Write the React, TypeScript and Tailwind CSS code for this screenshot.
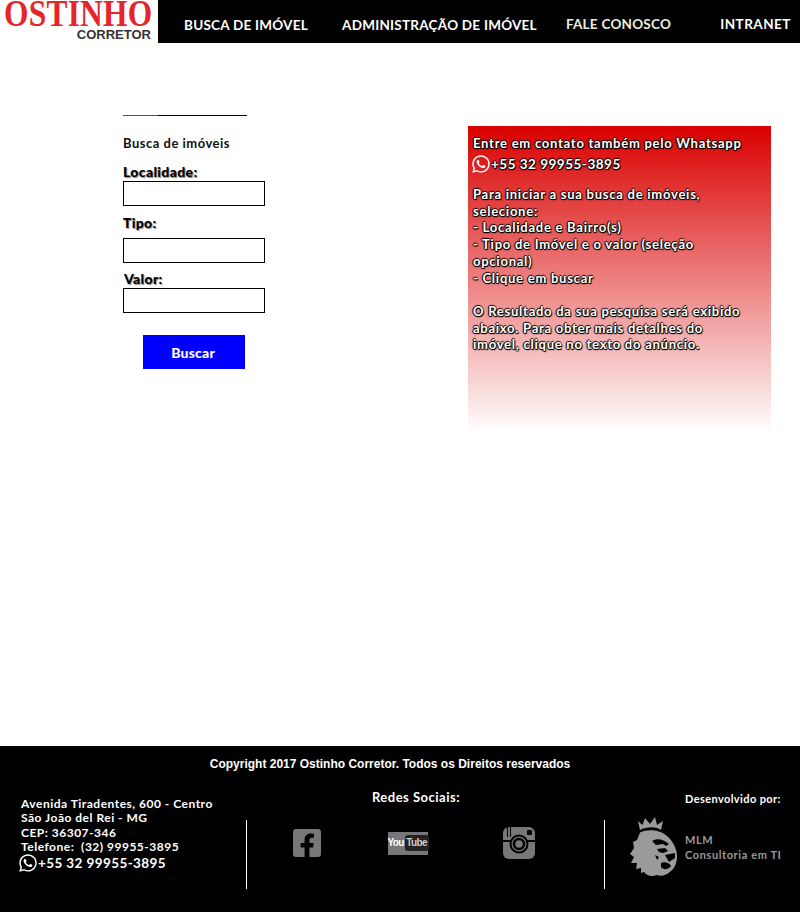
import React from "react";
import { FaWhatsapp, FaFacebookSquare } from "react-icons/fa";

const futura = "font-['Lato','Noto_Sans',sans-serif]";
const panelShadow = "[text-shadow:1px_1px_1px_#000,-1px_0_1px_#000,0_1px_1px_#000,0_-1px_1px_#000]";
const labelShadow = "[text-shadow:1px_1px_1px_#888]";

function Field({ label, labelClass, inputClass }: { label: string; labelClass: string; inputClass?: string }) {
  return (
    <div className={inputClass}>
      <div className={`h-[18px] text-[14px] font-black leading-[17px] tracking-[0.35px] text-black ${labelShadow} ${labelClass}`}>{label}</div>
      <input className="block h-[25px] w-[142px] border border-black bg-white" />
    </div>
  );
}

function Lion() {
  return (
    <svg width="48" height="60" viewBox="0 0 48 60" className="shrink-0">
      <path fill="#9a9a9a" d="M10 13 L8 4 L12.5 8 L15 1 L20 7 L25 0 L27 8 L33 4 L31 13 C25 9 16 10 10 13Z" />
      <path fill="#9a9a9a" d="M10 15.5 C18 11.5 30 12.5 37 19 C43 24 47 32 47 39 C47 45 45 51 41 54 C37 58 31 60 27 58 C22 60 17 59 14 55 L11 56 L11 51 L6 52 L7 46 L1 46 L4 40 L0 37 L4 31 L3 25 L7 23 Z" />
      <path fill="#000" d="M22 24 C27 21 33 22 39 27 L36 29 L33 27 L26 28 Z" />
      <path fill="#000" d="M27 32 L35 31 L38 34 L33 36 L29 35 Z" />
      <path fill="#000" d="M35 38 L45 36 L45 41 L39 45 Z" />
      <path fill="#000" d="M31 46 C34 44 40 46 41 49 C38 53 33 53 31 50 Z" />
      <path fill="#000" d="M25 38 L29 40 L27 43 Z" />
    </svg>
  );
}

function Instagram() {
  return (
    <svg width="32" height="32" viewBox="0 0 32 32">
      <rect width="32" height="32" rx="6" fill="#777" />
      <rect x="0" y="13" width="32" height="2" fill="#000" />
      <circle cx="16" cy="17" r="8.5" fill="#777" stroke="#000" strokeWidth="2" />
      <circle cx="16" cy="17" r="5" fill="#777" stroke="#000" strokeWidth="2.5" />
      <rect x="24" y="3" width="5" height="5" rx="1" fill="#000" />
      <rect x="4" y="0" width="1" height="10" fill="#000" />
      <rect x="7" y="0" width="1" height="10" fill="#000" />
    </svg>
  );
}

export default function App() {
  return (
    <div className={`flex h-[912px] w-[800px] flex-col overflow-hidden bg-white ${futura}`}>
      <header className="flex h-[43px] shrink-0">
        <div className="flex w-[158px] shrink-0 flex-col bg-white">
          <div className="h-[28px] origin-bottom scale-y-[1.2] pl-[4px] font-['Liberation_Serif',serif] text-[31.5px] font-bold leading-[32px] tracking-[0.2px] whitespace-nowrap text-[#e4262c]">
            OSTINHO
          </div>
          <div className="pr-[7px] text-right font-['Liberation_Sans',sans-serif] text-[13px] font-bold leading-[13px] text-[#333]">CORRETOR</div>
        </div>
        <nav className="flex flex-1 items-center bg-black pt-[7px] text-[13.5px] font-bold tracking-[0.25px] text-white">
          <span className="ml-[26px] whitespace-nowrap">BUSCA DE IMÓVEL</span>
          <span className="ml-[34px] whitespace-nowrap">ADMINISTRAÇÃO DE IMÓVEL</span>
          <span className="ml-[29px] -mt-[2px] whitespace-nowrap text-[#eeeedd]">FALE CONOSCO</span>
          <span className="ml-[49px] -mt-[2px] whitespace-nowrap tracking-[0.5px]">INTRANET</span>
        </nav>
      </header>

      <main className="flex flex-1 items-start">
        <section className="ml-[123px] mt-[72px] w-[345px] shrink-0">
          <div className="flex h-px w-[124px]">
            <div className="w-[35px] bg-[#d81c1c]" />
            <div className="flex-1 bg-black" />
          </div>
          <h2 className="mt-[19px] text-[13px] font-bold leading-[17px] tracking-[0.5px] text-[#111]">Busca de imóveis</h2>
          <div className="mt-[11px]">
            <Field label="Localidade:" labelClass="" />
            <Field label="Tipo:" labelClass="mb-[6px]" inputClass="mt-[8px]" />
            <Field label="Valor:" labelClass="pl-px" inputClass="mt-[7px]" />
          </div>
          <button className="ml-[20px] mt-[22px] block h-[34px] w-[102px] bg-[#0000ff] pr-[2px] text-[14px] font-black tracking-[0.2px] text-white">
            Buscar
          </button>
        </section>

        <aside className={`mt-[83px] h-[307px] w-[303px] shrink-0 bg-[linear-gradient(to_bottom,#da0000,#ffffff)] pl-[5px] pt-[8px] text-[13px] font-bold tracking-[0.75px] text-white ${panelShadow}`}>
          <div className="leading-[18px]">Entre em contato também pelo Whatsapp</div>
          <div className="mt-px flex h-[22px] items-center text-[13.5px] tracking-[0.5px]">
            <FaWhatsapp className="-ml-[2px] shrink-0" size={20} />
            <span>+55 32 99955-3895</span>
          </div>
          <div className="mt-[11px] w-[272px] leading-[16.7px]">
            <p>Para iniciar a sua busca de imóveis, selecione:</p>
            <p>- Localidade e Bairro(s)</p>
            <p>- Tipo de Imóvel e o valor (seleção opcional)</p>
            <p>- Clique em buscar</p>
            <p className="mt-[16.7px]">O Resultado da sua pesquisa será exibido abaixo. Para obter mais detalhes do imóvel, clique no texto do anúncio.</p>
          </div>
        </aside>
      </main>

      <footer className="h-[166px] shrink-0 bg-black text-white">
        <div className="pr-[20px] pt-[11px] text-center font-['Liberation_Sans',sans-serif] text-[12px] font-bold leading-[14px]">
          Copyright 2017 Ostinho Corretor. Todos os Direitos reservados
        </div>
        <div className="mt-[12px] flex">
          <div className="w-[246px] shrink-0 pl-[21px] pt-[14px] text-[12px] font-bold leading-[14.4px] tracking-[0.5px]">
            <div>Avenida Tiradentes, 600 - Centro</div>
            <div>São João del Rei - MG</div>
            <div>CEP: 36307-346</div>
            <div className="whitespace-pre">Telefone:  (32) 99955-3895</div>
            <div className="-ml-[3px] flex h-[17px] items-center text-[13.5px] tracking-[0.4px]">
              <FaWhatsapp className="shrink-0" size={20} />
              <span>+55 32 99955-3895</span>
            </div>
          </div>
          <div className="mt-[37px] h-[69px] w-px shrink-0 bg-white" />
          <div className="flex w-[357px] shrink-0 flex-col">
            <div className="pr-[19px] pt-[6px] text-center text-[13px] font-bold leading-[16px] tracking-[0.5px]">Redes Sociais:</div>
            <div className="mt-[22px] flex h-[32px] items-center pl-[44px]">
              <FaFacebookSquare size={32} color="#777" />
              <div className="ml-[65px] flex h-[23px] w-[40px] items-center justify-center gap-px bg-[#777] font-['Liberation_Sans',sans-serif] text-[10px] font-bold leading-none tracking-[-0.6px]">
                <span>You</span>
                <span className="rounded-[3px] bg-[#222] px-[1.5px] py-[3px] text-[#ccc]">Tube</span>
              </div>
              <div className="ml-[75px]"><Instagram /></div>
            </div>
          </div>
          <div className="mt-[37px] h-[69px] w-px shrink-0 bg-white" />
          <div className="flex flex-1 flex-col">
            <div className="pl-[80px] pt-[9px] text-[11px] font-bold leading-[14px] tracking-[0.4px]">Desenvolvido por:</div>
            <div className="mt-[11px] flex pl-[25px]">
              <Lion />
              <div className="ml-[7px] pt-[15px] text-[11px] font-bold leading-[15px] tracking-[0.6px] text-[#999]">
                <div>MLM</div>
                <div className="whitespace-nowrap">Consultoria em TI</div>
              </div>
            </div>
          </div>
        </div>
      </footer>
    </div>
  );
}
